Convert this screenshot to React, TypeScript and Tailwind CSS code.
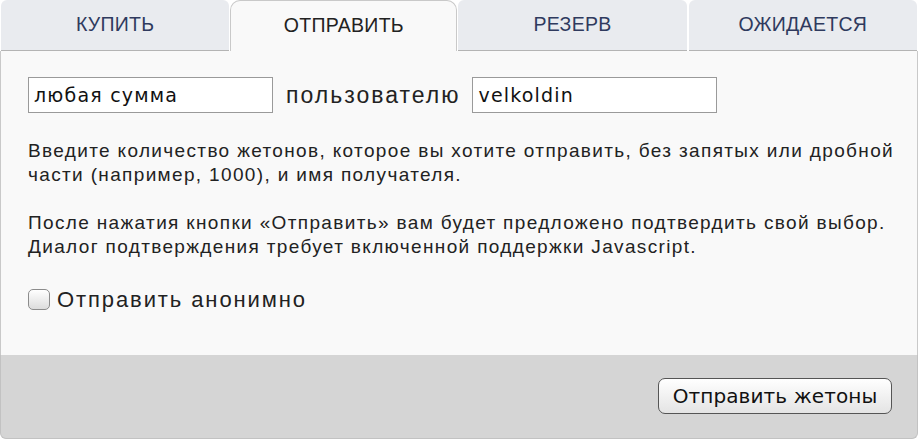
export default function App() {
  const tabs = [
    { label: 'КУПИТЬ', active: false },
    { label: 'ОТПРАВИТЬ', active: true },
    { label: 'РЕЗЕРВ', active: false },
    { label: 'ОЖИДАЕТСЯ', active: false },
  ];

  return (
    <div className="w-[922px] h-[448px] bg-white font-['Liberation_Sans',Arial,sans-serif]">
      <div className="w-[918px]">
        {/* tabs */}
        <div className="flex h-[51px]">
          {tabs.map((tab) =>
            tab.active ? (
              <div
                key={tab.label}
                className="w-[227px] flex items-start justify-center pt-[10px] bg-[#f9f9f9] border border-b-0 border-[#c9c9c9] rounded-t-[10px] text-[19.5px] tracking-[0.3px] text-[#222]"
              >
                {tab.label}
              </div>
            ) : (
              <div
                key={tab.label}
                className="flex-1 flex items-start justify-center pt-[10px] bg-[#e9ebef] border-b border-[#b4b4b4] rounded-t-[6px] mx-px text-[19.5px] tracking-[0.3px] text-[#2f3a5e]"
              >
                {tab.label}
              </div>
            )
          )}
        </div>

        {/* panel */}
        <div className="h-[304px] bg-[#f9f9f9] border-x border-[#c9c9c9] pl-[27px] pt-[26px]">
          <div className="flex items-center h-[36px]">
            <div className="w-[245px] h-[36px] border border-[#9a9a9a] bg-white flex items-center px-[5px] font-['DejaVu_Sans',sans-serif] text-[19px] tracking-[1.2px] text-[#111]">
              любая сумма
            </div>
            <span className="ml-[13px] mr-[12px] text-[23px] tracking-[2px] text-[#222]">пользователю</span>
            <div className="w-[245px] h-[36px] border border-[#9a9a9a] bg-white flex items-center px-[5px] font-['DejaVu_Sans',sans-serif] text-[19px] tracking-[1.2px] text-[#111]">
              velkoldin
            </div>
          </div>

          <div className="mt-[26px] whitespace-nowrap text-[19px] tracking-[1.35px] leading-[24px] text-[#222]">
            <p>
              Введите количество жетонов, которое вы хотите отправить, без запятых или дробной
              <br />
              части (например, 1000), и имя получателя.
            </p>
            <p className="mt-[24px]">
              После нажатия кнопки «Отправить» вам будет предложено подтвердить свой выбор.
              <br />
              Диалог подтверждения требует включенной поддержки Javascript.
            </p>
          </div>

          <label className="mt-[24px] flex items-center gap-[7px]">
            <span className="w-[22px] h-[21px] rounded-[5px] border border-[#8c8c8c] bg-gradient-to-b from-white to-[#dcdcdc]" />
            <span className="text-[22px] tracking-[1.9px] text-[#222]">Отправить анонимно</span>
          </label>
        </div>

        {/* footer */}
        <div className="h-[84px] bg-[#d5d5d5] border-x border-b border-[#c2c2c2] rounded-b-[6px] flex justify-end items-start pt-[23px] pr-[25px]">
          <button className="w-[234px] h-[36px] rounded-[7px] border border-[#555] bg-gradient-to-b from-white to-[#e4e4e4] font-['DejaVu_Sans',sans-serif] text-[20px] tracking-[0.1px] text-[#111]">
            Отправить жетоны
          </button>
        </div>
      </div>
    </div>
  );
}
